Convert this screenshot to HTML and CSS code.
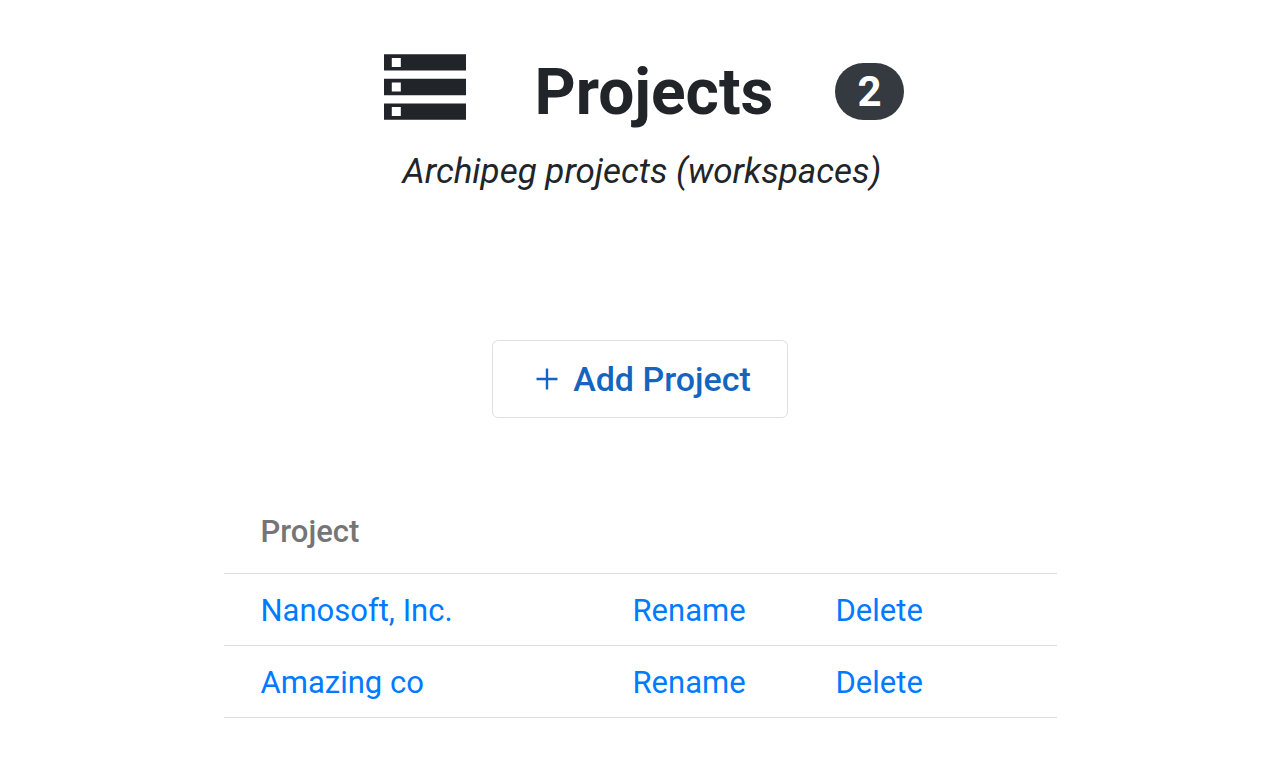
FILE: index.html
```html
<!DOCTYPE html>
<html lang="en">
  <head>
    <meta charset="utf-8">
    <meta name="viewport" content="width=device-width, initial-scale=1.0">
    <title>Projects</title>
    <link rel="stylesheet" href="styles.css">
  </head>
  <body>
    <main class="page">
      <header class="page-header">
        <div class="title-row">
          <svg class="storage-icon" viewBox="0 0 20 16" aria-hidden="true">
            <path fill-rule="evenodd" d="M0 16h20v-4H0v4zm1.9-3.1h2.2v2.2H1.9v-2.2zM0 0v4h20V0H0zm4.1 3.1H1.9V.9h2.2v2.2zM0 10h20V6H0v4zm1.9-3.1h2.2v2.2H1.9V6.9z"/>
          </svg>
          <h1>Projects</h1>
          <span class="badge">2</span>
        </div>
        <p class="subtitle">Archipeg projects (workspaces)</p>
      </header>

      <button type="button" class="add-button">
        <svg class="add-icon" viewBox="0 0 36 36" aria-hidden="true">
          <path d="M7.5 18h21M18 7.5v21"/>
        </svg>
        Add Project
      </button>

      <table class="project-table">
        <thead>
          <tr>
            <th class="name">Project</th>
            <th class="rename"></th>
            <th class="delete"></th>
          </tr>
        </thead>
        <tbody>
          <tr>
            <td><a href="#">Nanosoft, Inc.</a></td>
            <td><a href="#">Rename</a></td>
            <td><a href="#">Delete</a></td>
          </tr>
          <tr>
            <td><a href="#">Amazing co</a></td>
            <td><a href="#">Rename</a></td>
            <td><a href="#">Delete</a></td>
          </tr>
        </tbody>
      </table>
    </main>
  </body>
</html>
```

FILE: styles.css
```css
body {
  margin: 0;
  font-family: Roboto, sans-serif;
  background-color: #fff;
  color: #212529;
}

.page {
  display: flex;
  flex-direction: column;
  align-items: center;
  padding: 54px 20px 40px 30px;
}

.page-header {
  padding-left: 4px;
  text-align: center;
}

.title-row {
  display: flex;
  justify-content: center;
  align-items: flex-end;
  padding-left: 4px;
}

.storage-icon {
  width: 82px;
  height: 66px;
  fill: currentColor;
}

h1 {
  margin: 0 62px 0 68px;
  font-size: 64px;
  line-height: 54px;
  font-weight: 700;
}

.badge {
  padding: 0 22px;
  border-radius: 29px;
  background-color: #343a40;
  color: #fff;
  font-size: 42px;
  line-height: 57px;
  font-weight: 700;
}

.subtitle {
  margin: 30px 0 0;
  font-size: 35px;
  line-height: 44px;
  font-style: italic;
}

.add-button {
  display: flex;
  align-items: center;
  gap: 8px;
  height: 78px;
  margin-top: 146px;
  padding: 0 36px;
  border: 1px solid #e0e0e0;
  border-radius: 6px;
  background-color: #fff;
  color: #1565c0;
  font-family: inherit;
  font-size: 34px;
  line-height: 44px;
  font-weight: 500;
  cursor: pointer;
}

.add-icon {
  width: 36px;
  height: 36px;
  stroke: currentColor;
  stroke-width: 2.4;
}

.project-table {
  width: 100%;
  max-width: 833px;
  margin-top: 72px;
  border-collapse: collapse;
  font-size: 31px;
  text-align: left;
}

th,
td {
  height: 69px;
  padding: 2px 0 0 37px;
  border-bottom: 1px solid #e0e0e0;
}

th {
  height: 83px;
  padding-top: 0;
  color: #757575;
  font-weight: 500;
}

.name {
  width: 335px;
}

.rename {
  width: 166px;
}

a {
  color: #007bff;
  text-decoration: none;
}
```
